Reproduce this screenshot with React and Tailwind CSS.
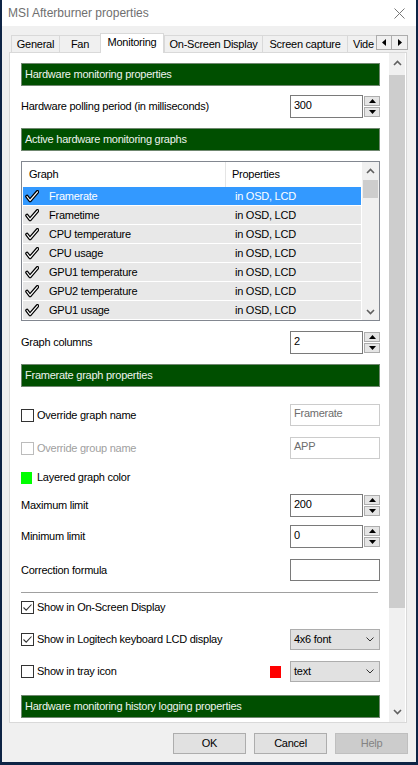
import React from "react";

const GreenHeader = ({ children, className = "" }) => (
  <div
    className={`h-[23px] shrink-0 bg-[#004f00] border border-[#6f876f] flex items-center pl-[3px] text-[#eef4ee] ${className}`}
  >
    {children}
  </div>
);

const SpinTri = ({ up }) => (
  <svg width="7" height="4" viewBox="0 0 7 4">
    <polygon points={up ? "0,4 3.5,0 7,4" : "0,0 3.5,4 7,0"} fill="#000" />
  </svg>
);

const Spin = ({ value }) => (
  <div className="flex h-[23px] w-[90px]">
    <div className="w-[73px] h-full border border-[#7a7a7a] bg-white flex items-center pl-[3px] pb-[2px]">
      {value}
    </div>
    <div className="flex flex-col justify-center gap-[1px] w-[17px] pl-[1px]">
      <div className="h-[10px] w-[16px] border border-[#adadad] bg-[#e5e5e5] flex items-center justify-center">
        <SpinTri up />
      </div>
      <div className="h-[10px] w-[16px] border border-[#adadad] bg-[#e5e5e5] flex items-center justify-center">
        <SpinTri />
      </div>
    </div>
  </div>
);

const Checkbox = ({ checked, disabled }) => (
  <div
    className={`w-[13px] h-[13px] shrink-0 border ${
      disabled ? "border-[#bcbcbc]" : "border-[#333333]"
    } bg-white flex items-center justify-center`}
  >
    {checked && (
      <svg width="11" height="11" viewBox="0 0 11 11">
        <path d="M1.5 5.5 L4.2 8.2 L9.5 2.5" fill="none" stroke="#333" strokeWidth="1.1" />
      </svg>
    )}
  </div>
);

const Dropdown = ({ value }) => (
  <div className="w-[90px] h-[21px] bg-[#e1e1e1] border border-[#adadad] flex items-center justify-between pl-[3px] pr-[5px]">
    <span>{value}</span>
    <svg width="8" height="5" viewBox="0 0 8 5">
      <polyline points="0.5,0.5 4,4 7.5,0.5" fill="none" stroke="#333" strokeWidth="1" />
    </svg>
  </div>
);

const TextBox = ({ value, light }) => (
  <div
    className={`w-[90px] h-[22px] bg-white border ${
      light ? "border-[#cccccc] text-[#6d6d6d]" : "border-[#7a7a7a]"
    } flex items-center pl-[3px] pb-[3px]`}
  >
    {value}
  </div>
);

const Chevron = ({ down }) => (
  <svg width="9" height="6" viewBox="0 0 9 6">
    <polyline
      points={down ? "1,1 4.5,4.5 8,1" : "1,5 4.5,1.5 8,5"}
      fill="none"
      stroke="#606060"
      strokeWidth="1.6"
    />
  </svg>
);

const ListCheck = () => (
  <svg width="14" height="13" viewBox="0 0 14 13">
    <path
      d="M2 6.5 L5 10.5 L12.5 1.8"
      fill="none"
      stroke="#000"
      strokeWidth="3.6"
      strokeLinecap="round"
      strokeLinejoin="round"
    />
    <path
      d="M2 6.5 L5 10.5 L12.5 1.8"
      fill="none"
      stroke="#fff"
      strokeWidth="1.2"
      strokeLinecap="round"
      strokeLinejoin="round"
    />
  </svg>
);

const rows = [
  "Framerate",
  "Frametime",
  "CPU temperature",
  "CPU usage",
  "GPU1 temperature",
  "GPU2 temperature",
  "GPU1 usage",
];

const tabs = [
  { label: "General", w: "w-[48px]" },
  { label: "Fan", w: "w-[41px]" },
  { label: "Monitoring", w: "w-[64px]", active: true },
  { label: "On-Screen Display", w: "w-[98px]" },
  { label: "Screen capture", w: "w-[85px]" },
];

export default function App() {
  return (
    <div className="w-[418px] h-[765px] bg-[#0e2445] overflow-hidden font-['Liberation_Sans',Arial,sans-serif] text-[11px] tracking-[-0.25px] text-black leading-[13px]">
      <div className="ml-[2px] w-[414px] h-[762px] bg-[#f0f0f0] flex flex-col">
        {/* Title bar */}
        <div className="h-[26px] shrink-0 bg-white flex items-center justify-between pl-[6px] pr-[11px]">
          <span className="text-[12px] tracking-[0px] text-[#6f6f6f]">MSI Afterburner properties</span>
          <svg width="11" height="11" viewBox="0 0 11 11">
            <path d="M0.5 0.5 L10.5 10.5 M10.5 0.5 L0.5 10.5" stroke="#777" strokeWidth="1" />
          </svg>
        </div>

        {/* Tabs */}
        <div className="flex items-end h-[20px] mt-[7px] ml-[9px] -mb-px relative z-10">
          {tabs.map((t) =>
            t.active ? (
              <div
                key={t.label}
                className={`${t.w} h-[20px] bg-white border border-b-0 border-[#d9d9d9] flex items-center justify-center pb-[3px]`}
              >
                {t.label}
              </div>
            ) : (
              <div
                key={t.label}
                className={`${t.w} h-[17px] mb-px bg-[#f0f0f0] border border-b-0 border-r-0 border-[#d9d9d9] flex items-center justify-center`}
              >
                {t.label}
              </div>
            )
          )}
          <div className="w-[29px] h-[17px] mb-px bg-[#f0f0f0] border border-b-0 border-r-0 border-[#d9d9d9] flex items-center pl-[5px] whitespace-nowrap">
            Vide
          </div>
          <div className="flex mb-[3px]">
            <div className="w-[16px] h-[15px] border border-[#adadad] bg-[#f0f0f0] flex items-center justify-center">
              <svg width="4" height="7" viewBox="0 0 4 7">
                <polygon points="4,0 0,3.5 4,7" fill="#000" />
              </svg>
            </div>
            <div className="w-[16px] h-[15px] border border-l-0 border-[#adadad] bg-[#f0f0f0] flex items-center justify-center">
              <svg width="4" height="7" viewBox="0 0 4 7">
                <polygon points="0,0 4,3.5 0,7" fill="#000" />
              </svg>
            </div>
          </div>
        </div>

        {/* Panel */}
        <div className="ml-[7px] w-[398px] h-[671px] shrink-0 border border-[#d9d9d9] bg-white flex">
          <div className="pl-[11px] w-[370px] h-full overflow-hidden flex flex-col">
            <GreenHeader className="mt-[10px]">Hardware monitoring properties</GreenHeader>

            <div className="mt-[9px] h-[23px] shrink-0 flex items-center justify-between">
              <span>Hardware polling period (in milliseconds)</span>
              <Spin value="300" />
            </div>

            <GreenHeader className="mt-[10px]">Active hardware monitoring graphs</GreenHeader>

            {/* List */}
            <div className="mt-[10px] h-[160px] shrink-0 border border-[#828790] bg-white flex">
              <div className="flex-1 flex flex-col">
                <div className="h-[25px] shrink-0 flex">
                  <div className="w-[204px] pl-[7px] border-r border-[#e5e5e5] h-full flex items-center">
                    Graph
                  </div>
                  <div className="pl-[6px] flex items-center">Properties</div>
                </div>
                {rows.map((r, i) => (
                  <div
                    key={r}
                    className={`mx-px h-[18px] mb-px shrink-0 flex items-center ${
                      i === 0 ? "bg-[#3399ff] text-white" : "bg-[#e8e8e8]"
                    }`}
                  >
                    <div className="w-[26px] pl-[2px] flex items-center">
                      <ListCheck />
                    </div>
                    <div className="w-[186px]">{r}</div>
                    <div>in OSD, LCD</div>
                  </div>
                ))}
              </div>
              <div className="w-[17px] bg-[#f0f0f0] flex flex-col">
                <div className="h-[18px] flex items-center justify-center">
                  <Chevron />
                </div>
                <div className="mx-px h-[18px] bg-[#cdcdcd]" />
                <div className="flex-1" />
                <div className="h-[17px] flex items-center justify-center">
                  <Chevron down />
                </div>
              </div>
            </div>

            <div className="mt-[10px] h-[23px] shrink-0 flex items-center justify-between">
              <span>Graph columns</span>
              <Spin value="2" />
            </div>

            <GreenHeader className="mt-[10px]">Framerate graph properties</GreenHeader>

            <div className="mt-[17px] h-[22px] shrink-0 flex items-center justify-between">
              <div className="flex items-center gap-[3px]">
                <Checkbox />
                <span>Override graph name</span>
              </div>
              <TextBox value="Framerate" light />
            </div>

            <div className="mt-[11px] h-[22px] shrink-0 flex items-center justify-between">
              <div className="flex items-center gap-[3px] text-[#a0a0a0]">
                <Checkbox disabled />
                <span>Override group name</span>
              </div>
              <TextBox value="APP" light />
            </div>

            <div className="mt-[7px] h-[23px] shrink-0 flex items-center gap-[5px]">
              <div className="w-[11px] h-[12px] bg-[#00ff00]" />
              <span>Layered graph color</span>
            </div>

            <div className="mt-[5px] h-[23px] shrink-0 flex items-center justify-between">
              <span>Maximum limit</span>
              <Spin value="200" />
            </div>

            <div className="mt-[8px] h-[23px] shrink-0 flex items-center justify-between">
              <span>Minimum limit</span>
              <Spin value="0" />
            </div>

            <div className="mt-[11px] h-[22px] shrink-0 flex items-center justify-between">
              <span>Correction formula</span>
              <TextBox value="" />
            </div>

            <div className="mt-[11px] w-[357px] h-px shrink-0 bg-[#a0a0a0]" />

            <div className="mt-[3px] h-[22px] shrink-0 flex items-center gap-[3px]">
              <Checkbox checked />
              <span>Show in On-Screen Display</span>
            </div>

            <div className="mt-[11px] h-[21px] shrink-0 flex items-center justify-between">
              <div className="flex items-center gap-[3px]">
                <Checkbox checked />
                <span>Show in Logitech keyboard LCD display</span>
              </div>
              <Dropdown value="4x6 font" />
            </div>

            <div className="mt-[11px] h-[21px] shrink-0 flex items-center justify-between">
              <div className="flex items-center gap-[3px]">
                <Checkbox />
                <span>Show in tray icon</span>
              </div>
              <div className="flex items-center gap-[9px]">
                <div className="w-[11px] h-[12px] bg-[#ff0000]" />
                <Dropdown value="text" />
              </div>
            </div>

            <GreenHeader className="mt-[13px]">Hardware monitoring history logging properties</GreenHeader>
          </div>

          <div className="flex-1" />

          {/* Panel scrollbar */}
          <div className="w-[16px] mr-px bg-[#f0f0f0] flex flex-col">
            <div className="h-[22px] flex justify-center pt-[7px]">
              <Chevron />
            </div>
            <div className="h-[533px] bg-[#cdcdcd]" />
            <div className="flex-1" />
            <div className="h-[20px] flex items-center justify-center">
              <Chevron down />
            </div>
          </div>
        </div>

        {/* Buttons */}
        <div className="mt-[10px] flex justify-end gap-[8px] pr-[8px]">
          <div className="w-[73px] h-[21px] border border-[#adadad] bg-[#e1e1e1] flex items-center justify-center">
            OK
          </div>
          <div className="w-[73px] h-[21px] border border-[#adadad] bg-[#e1e1e1] flex items-center justify-center">
            Cancel
          </div>
          <div className="w-[73px] h-[21px] border border-[#bfbfbf] bg-[#cccccc] text-[#838383] flex items-center justify-center">
            Help
          </div>
        </div>
      </div>
    </div>
  );
}
